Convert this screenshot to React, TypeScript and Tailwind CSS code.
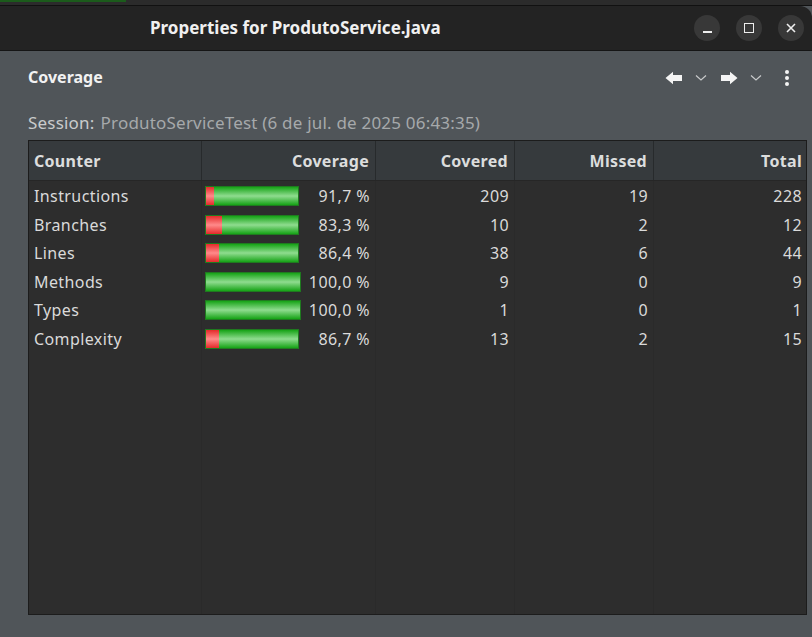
import React from "react";

const rows = [
  { name: "Instructions", pct: "91,7 %", ratio: 0.917, covered: 209, missed: 19, total: 228 },
  { name: "Branches", pct: "83,3 %", ratio: 0.833, covered: 10, missed: 2, total: 12 },
  { name: "Lines", pct: "86,4 %", ratio: 0.864, covered: 38, missed: 6, total: 44 },
  { name: "Methods", pct: "100,0 %", ratio: 1, covered: 9, missed: 0, total: 9 },
  { name: "Types", pct: "100,0 %", ratio: 1, covered: 1, missed: 0, total: 1 },
  { name: "Complexity", pct: "86,7 %", ratio: 0.867, covered: 13, missed: 2, total: 15 },
];

const cols = "grid grid-cols-[173px_174px_139px_139px_1fr]";

function Bar({ ratio, full }: { ratio: number; full: boolean }) {
  const w = full ? 96 : 94;
  const red = Math.round((1 - ratio) * w);
  return (
    <div className="flex h-[20px] border border-[#1f7a1f]" style={{ width: w }}>
      {red > 0 && (
        <div
          className="h-full bg-[linear-gradient(to_bottom,#e42a2a,#ff8a8a_50%,#e42a2a)]"
          style={{ width: red }}
        />
      )}
      <div className="h-full flex-1 bg-[linear-gradient(to_bottom,#16a316,#8fdc8f_50%,#16a316)]" />
    </div>
  );
}

function Chevron() {
  return (
    <svg width="12" height="8" viewBox="0 0 12 8">
      <path d="M1 1.5 L6 6 L11 1.5" fill="none" stroke="#c8cacb" strokeWidth="1.2" />
    </svg>
  );
}

export default function App() {
  return (
    <div
      className="w-[812px] h-[637px] overflow-hidden bg-[#505559] flex flex-col"
      style={{ fontFamily: '"Noto Sans", "DejaVu Sans", sans-serif' }}
    >
      {/* top strip */}
      <div className="h-[5px] bg-[#2b2b2b] relative shrink-0">
        <div className="absolute left-0 top-0 h-[2px] w-[126px] bg-[#1b5b1b]" />
      </div>
      <div className="h-[1px] bg-[#111] shrink-0" />
      {/* title bar */}
      <div className="h-[45px] bg-[#232323] rounded-tr-[12px] flex items-center shrink-0 border-b border-[#151515]">
        <div className="pl-[150px] text-[17px] font-bold text-[#f0f0f0]">
          Properties for ProdutoService.java
        </div>
        <div className="ml-auto flex items-center gap-[16px] pr-[8px]">
          <div className="w-[26px] h-[26px] rounded-full bg-[#383838] flex items-center justify-center">
            <div className="w-[9px] h-[2px] bg-[#eee] mt-[8px]" />
          </div>
          <div className="w-[26px] h-[26px] rounded-full bg-[#383838] flex items-center justify-center">
            <div className="w-[10px] h-[10px] border-[1.5px] border-[#eee]" />
          </div>
          <div className="w-[26px] h-[26px] rounded-full bg-[#383838] flex items-center justify-center">
            <svg width="10" height="10" viewBox="0 0 10 10">
              <path d="M1 1 L9 9 M9 1 L1 9" stroke="#eee" strokeWidth="1.6" />
            </svg>
          </div>
        </div>
      </div>
      {/* header */}
      <div className="flex items-center pl-[28px] pr-[22px] h-[50px] shrink-0">
        <div className="text-[16px] font-bold text-[#f2f2f2] mt-[1px]">Coverage</div>
        <div className="ml-auto flex items-center mt-[4px]">
          <svg width="18" height="14" viewBox="0 0 18 14">
            <path d="M0.5 7 L8 0.8 L8 4 L17 4 L17 10 L8 10 L8 13.2 Z" fill="#f4f4f4" />
          </svg>
          <div className="ml-[12px]">
            <Chevron />
          </div>
          <svg width="18" height="14" viewBox="0 0 18 14" className="ml-[13px]">
            <path d="M17.5 7 L10 0.8 L10 4 L1 4 L1 10 L10 10 L10 13.2 Z" fill="#f4f4f4" />
          </svg>
          <div className="ml-[12px]">
            <Chevron />
          </div>
          <svg width="6" height="18" viewBox="0 0 6 18" className="ml-[22px]">
            <circle cx="3" cy="3" r="2" fill="#f4f4f4" />
            <circle cx="3" cy="9" r="2" fill="#f4f4f4" />
            <circle cx="3" cy="15" r="2" fill="#f4f4f4" />
          </svg>
        </div>
      </div>
      {/* session */}
      <div className="pl-[28px] mt-[9px] h-[26px] flex items-center text-[17px] tracking-[0.2px] shrink-0">
        <span className="text-[#c9cbcc]">Session:</span>
        <span className="text-[#a6a9ab] ml-[6px]">ProdutoServiceTest (6 de jul. de 2025 06:43:35)</span>
      </div>
      {/* table */}
      <div className="ml-[28px] mr-[5px] mt-[4px] h-[475px] bg-[#2d2d2d] border border-[#1c1c1c] shrink-0 flex flex-col">
        <div className={`${cols} h-[40px] bg-[#363a3d] border-b border-[#262626] text-[16px] tracking-[0.3px] font-bold text-[#dcdddd]`}>
          <div className="flex items-center pl-[5px] border-r border-[#272a2c]">Counter</div>
          <div className="flex items-center justify-end pr-[6px] border-r border-[#272a2c]">Coverage</div>
          <div className="flex items-center justify-end pr-[6px] border-r border-[#272a2c]">Covered</div>
          <div className="flex items-center justify-end pr-[6px] border-r border-[#272a2c]">Missed</div>
          <div className="flex items-center justify-end pr-[4px]">Total</div>
        </div>
        <div className="relative flex-1">
          <div className={`${cols} absolute inset-0 pointer-events-none`}>
            <div className="border-r border-[#2a2a2a]" />
            <div className="border-r border-[#2a2a2a]" />
            <div className="border-r border-[#2a2a2a]" />
            <div className="border-r border-[#2a2a2a]" />
            <div />
          </div>
          <div className="relative pt-[1px]">
            {rows.map((r) => (
              <div key={r.name} className={`${cols} h-[28.5px] text-[16px] tracking-[0.4px] text-[#dadada]`}>
                <div className="flex items-center pl-[5px]">{r.name}</div>
                <div className="flex items-center pl-[3px] pr-[6px]">
                  <Bar ratio={r.ratio} full={r.ratio === 1} />
                  <span className="ml-auto">{r.pct}</span>
                </div>
                <div className="flex items-center justify-end pr-[6px]">{r.covered}</div>
                <div className="flex items-center justify-end pr-[6px]">{r.missed}</div>
                <div className="flex items-center justify-end pr-[4px]">{r.total}</div>
              </div>
            ))}
          </div>
        </div>
      </div>
    </div>
  );
}
